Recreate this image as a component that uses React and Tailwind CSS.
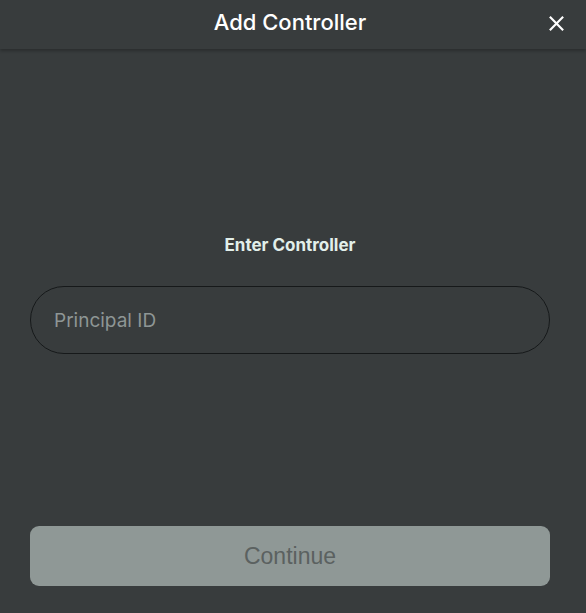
import React from "react";

export default function App() {
  return (
    <div className="w-[586px] h-[613px] bg-[#383c3d] flex flex-col overflow-hidden" style={{ fontFamily: "Inter, 'Noto Sans', sans-serif" }}>
      <header className="relative h-[49px] flex items-center justify-center pr-[6px] shrink-0 shadow-[0_2px_3px_rgba(0,0,0,0.25)] bg-[#383c3d] z-10">
        <h1 className="text-[22px] font-medium text-white leading-none -mt-[5px]">Add Controller</h1>
        <button className="absolute right-[22px] top-[16px] w-[15px] h-[15px] text-white">
          <svg viewBox="0 0 14 14" width="15" height="15" fill="none" stroke="currentColor" strokeWidth="2" strokeLinecap="square">
            <path d="M1.5 1.5L12.5 12.5M12.5 1.5L1.5 12.5" />
          </svg>
        </button>
      </header>
      <main className="flex-1 flex flex-col pl-[30px] pr-[36px]">
        <div className="h-[186px] shrink-0" />
        <p className="text-center font-bold text-[17px] leading-[20px] text-[#e2efea]">Enter Controller</p>
        <div className="h-[31px] shrink-0" />
        <input
          placeholder="Principal ID"
          className="w-full h-[68px] rounded-full border border-[#16191a] bg-transparent px-[23px] text-[19px] text-white placeholder:text-[#8e9695] outline-none"
        />
        <div className="h-[172px] shrink-0" />
        <button
          className="w-full h-[60px] rounded-[9px] bg-[#8f9896] text-[#5b6160] text-[23px]"
          style={{ fontFamily: "'Liberation Sans', Arial, sans-serif" }}
        >
          Continue
        </button>
      </main>
    </div>
  );
}
